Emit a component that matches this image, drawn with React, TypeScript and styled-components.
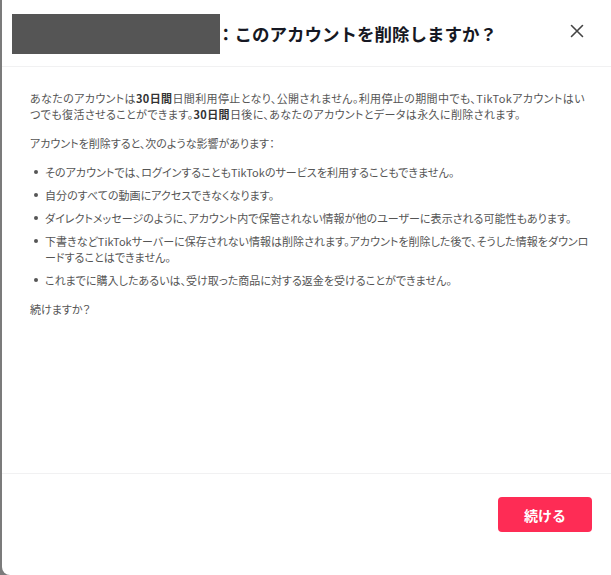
import styled, { createGlobalStyle } from "styled-components";

const GlobalStyle = createGlobalStyle`
  html, body {
    margin: 0;
    padding: 0;
    background: #7b7b7b;
  }
  body {
    font-family: "Noto Sans CJK JP", "Noto Sans", "Liberation Sans", sans-serif;
  }
`;

const bullets = [
  "そのアカウントでは、ログインすることもTikTokのサービスを利用することもできません。",
  "自分のすべての動画にアクセスできなくなります。",
  "ダイレクトメッセージのように、アカウント内で保管されない情報が他のユーザーに表示される可能性もあります。",
  "下書きなどTikTokサーバーに保存されない情報は削除されます。アカウントを削除した後で、そうした情報をダウンロードすることはできません。",
  "これまでに購入したあるいは、受け取った商品に対する返金を受けることができません。",
];

const CloseIcon = () => (
  <svg width="14" height="14" viewBox="0 0 14 14">
    <path d="M1.5 1.5L12.5 12.5M12.5 1.5L1.5 12.5" stroke="#444" strokeWidth="1.6" strokeLinecap="round" />
  </svg>
);

const App = () => {
  return (
    <>
      <GlobalStyle />
      <Modal>
        <Header>
          <Redacted />
          <Title>：このアカウントを削除しますか？</Title>
          <CloseButton aria-label="閉じる">
            <CloseIcon />
          </CloseButton>
        </Header>
        <Body>
          <Intro>
            あなたのアカウントは<strong>30日間</strong>日間利用停止となり、公開されません。利用停止の期間中でも、TikTokアカウントはいつでも復活させることができます。<strong>30日間</strong>日後に、あなたのアカウントとデータは永久に削除されます。
          </Intro>
          <Paragraph $top={13}>アカウントを削除すると、次のような影響があります：</Paragraph>
          <List>
            {bullets.map((text) => (
              <Item key={text}>{text}</Item>
            ))}
          </List>
          <Paragraph $top={13}>続けますか？</Paragraph>
        </Body>
        <Footer>
          <PrimaryButton>続ける</PrimaryButton>
        </Footer>
      </Modal>
    </>
  );
};

const Modal = styled.div`
  margin-left: 2px;
  height: 575px;
  background: #fff;
  border-radius: 0 0 0 8px;
  display: flex;
  flex-direction: column;
  box-sizing: border-box;
`;

const Header = styled.header`
  height: 66px;
  display: flex;
  align-items: center;
  padding: 0 24px 0 10px;
  border-bottom: 1px solid #f1f1f2;
  flex-shrink: 0;
`;

const Redacted = styled.div`
  width: 208px;
  height: 40px;
  margin-top: 2px;
  background: #555;
`;

const Title = styled.h2`
  margin: 0 0 0 -3px;
  font-size: 17.5px;
  font-weight: 700;
  color: #161823;
  flex: 1;
`;

const CloseButton = styled.button`
  border: none;
  background: none;
  padding: 0;
  width: 20px;
  height: 20px;
  display: flex;
  align-items: center;
  justify-content: center;
  cursor: pointer;
  margin-top: -4px;
`;

const Body = styled.main`
  flex: 1;
  padding: 23px 18px 0 28px;
  color: #555;
  font-size: 11px;
  line-height: 16px;
  font-feature-settings: "palt";
  line-break: anywhere;

  strong {
    color: #333;
    font-weight: 700;
  }
`;

const Paragraph = styled.p<{ $top?: number }>`
  margin: ${({ $top }) => $top ?? 0}px 0 0;
`;

const Intro = styled(Paragraph)`
  letter-spacing: 0.38px;
`;

const List = styled.ul`
  margin: 13px 0 0;
  padding: 0 0 0 15px;
  list-style: none;
  display: flex;
  flex-direction: column;
  gap: 7px;
  letter-spacing: 0.03px;
`;

const Item = styled.li`
  position: relative;

  &::before {
    content: "";
    position: absolute;
    left: -11px;
    top: 6px;
    width: 4px;
    height: 4px;
    border-radius: 50%;
    background: #555;
  }
`;

const Footer = styled.footer`
  border-top: 1px solid #f1f1f2;
  padding: 23px 19px 0 0;
  height: 78px;
  display: flex;
  justify-content: flex-end;
  align-items: flex-start;
  flex-shrink: 0;
`;

const PrimaryButton = styled.button`
  width: 94px;
  height: 35px;
  border: none;
  border-radius: 4px;
  background: #fe2c55;
  color: #fff;
  font-family: inherit;
  font-size: 14px;
  font-weight: 700;
  cursor: pointer;
`;

export default App;
